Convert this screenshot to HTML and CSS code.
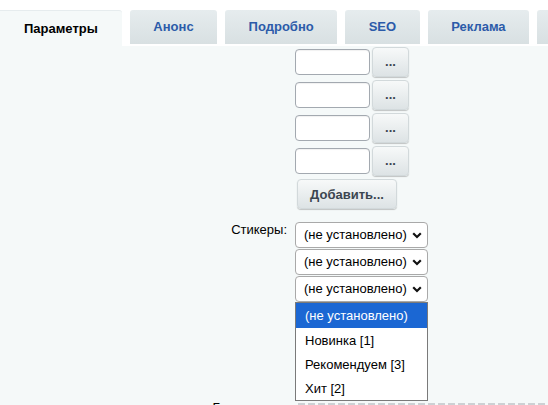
FILE: index.html
```html
<!DOCTYPE html>
<html lang="ru">
<head>
<meta charset="utf-8">
<title>Параметры</title>
<link rel="stylesheet" href="styles.css">
</head>
<body>
<div class="tabs">
  <div class="tab tab-active">Параметры</div>
  <div class="tab">Анонс</div>
  <div class="tab">Подробно</div>
  <div class="tab">SEO</div>
  <div class="tab">Реклама</div>
  <div class="tab tab-more"></div>
</div>
<div class="content">
  <div class="form">
    <div class="label"></div>
    <div class="field">
      <div class="file-row"><input class="text-input" type="text"><button class="btn btn-dots">...</button></div>
      <div class="file-row"><input class="text-input" type="text"><button class="btn btn-dots">...</button></div>
      <div class="file-row"><input class="text-input" type="text"><button class="btn btn-dots">...</button></div>
      <div class="file-row"><input class="text-input" type="text"><button class="btn btn-dots">...</button></div>
      <button class="btn btn-add">Добавить...</button>
    </div>

    <div class="label label-stickers">Стикеры:</div>
    <div class="field field-stickers">
      <div class="select">(не установлено)</div>
      <div class="select">(не установлено)</div>
      <div class="select">(не установлено)</div>
      <div class="dropdown">
        <div class="option option-selected">(не установлено)</div>
        <div class="option">Новинка [1]</div>
        <div class="option">Рекомендуем [3]</div>
        <div class="option">Хит [2]</div>
      </div>
    </div>

    <div class="label label-next">Бестселлер:</div>
    <div class="field field-next">
      <div class="dashed"></div>
    </div>
  </div>
</div>
</body>
</html>
```

FILE: styles.css
```css
html, body {
  margin: 0;
  padding: 0;
  background: #ffffff;
  height: 100%;
  overflow: hidden;
}

body {
  font-family: "Liberation Sans", Arial, sans-serif;
  font-size: 13px;
  color: #000;
}

.tabs {
  display: flex;
  align-items: flex-end;
  gap: 8px;
  padding-top: 10px;
  white-space: nowrap;
}

.tab {
  flex: none;
  height: 34px;
  line-height: 34px;
  margin-bottom: 2px;
  padding: 0 23.5px;
  font-weight: bold;
  color: #2c5ba9;
  background: linear-gradient(#e6ecee, #d8e0e2);
  border-radius: 3px 3px 0 0;
}

.tab-active {
  height: 35px;
  line-height: 35px;
  margin-bottom: 0;
  padding: 0 24px;
  color: #000;
  background: #f5f9f9;
  border-top: 1px solid #e6ecee;
  border-radius: 0 3px 0 0;
}

.tab-more {
  width: 60px;
}

.content {
  background: #f5f9f9;
  height: 400px;
  padding-top: 1px;
}

.form {
  display: grid;
  grid-template-columns: 287px 1fr;
  column-gap: 8px;
}

.label {
  text-align: right;
  line-height: 15px;
}

.file-row {
  display: flex;
  align-items: center;
  gap: 2px;
  height: 30px;
  margin-bottom: 3px;
}

.text-input {
  box-sizing: border-box;
  width: 75px;
  height: 26px;
  margin: 0;
  border: 1px solid #a3a9b0;
  border-radius: 4px;
  background: #fff;
  box-shadow: inset 0 1px 1px rgba(0, 0, 0, 0.06);
}

.btn {
  box-sizing: border-box;
  margin: 0;
  height: 30px;
  border: 1px solid #d2d9db;
  border-radius: 4px;
  background: linear-gradient(#f7f9f9, #dde3e5);
  box-shadow: 0 1px 1px rgba(0, 0, 0, 0.22);
  font-family: "Liberation Sans", Arial, sans-serif;
  font-size: 13px;
  font-weight: bold;
  color: #3b4550;
  padding: 0;
}

.btn-dots {
  width: 37px;
  line-height: 22px;
}

.btn-add {
  display: block;
  width: 100px;
  margin-left: 2px;
}

.label-stickers {
  margin-top: 13px;
}

.field-stickers {
  position: relative;
  margin-top: 13px;
}

.select {
  box-sizing: border-box;
  width: 133px;
  height: 26px;
  line-height: 24px;
  margin-bottom: 1px;
  padding: 0 0 0 8px;
  border: 1px solid #a9a9a9;
  border-radius: 4px;
  background: #fff url("data:image/svg+xml;utf8,<svg xmlns='http://www.w3.org/2000/svg' width='10' height='7' viewBox='0 0 10 7'><path d='M1.2 1.3 L5 5 L8.8 1.3' fill='none' stroke='%23111' stroke-width='2.2'/></svg>") no-repeat right 5px center;
}

.dropdown {
  position: absolute;
  top: 80px;
  left: 0;
  box-sizing: border-box;
  width: 133px;
  border: 1px solid #7a7a7a;
  background: #fff;
  z-index: 2;
}

.option {
  height: 24px;
  line-height: 26px;
  padding-left: 9px;
  white-space: nowrap;
}

.option-selected {
  height: 25px;
  background: #1b67d3;
  color: #fff;
}

.label-next {
  margin-top: 97px;
}

.field-next {
  margin-top: 100px;
}

.dashed {
  margin-left: 3px;
  height: 3px;
  background: repeating-linear-gradient(to right, #cdd1d4 0 7px, transparent 7px 10px);
}
```
